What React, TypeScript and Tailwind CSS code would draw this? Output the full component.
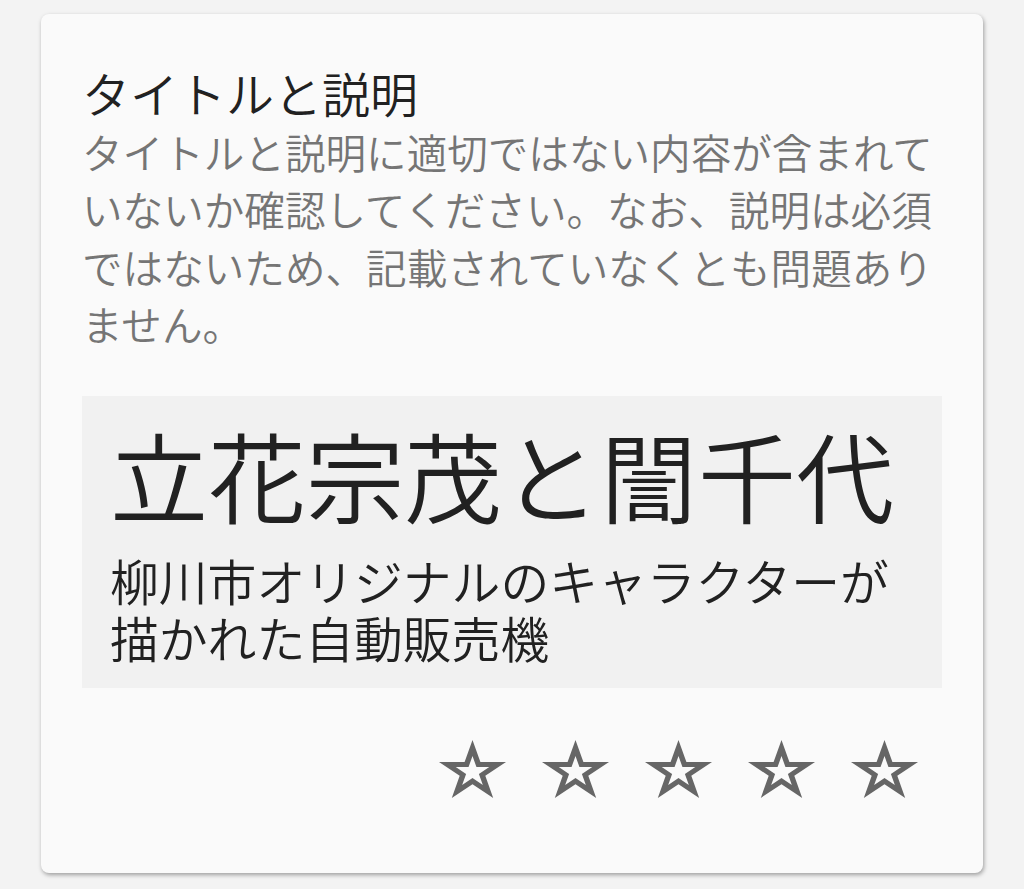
import React from "react";

const Star = () => (
  <svg width="67" height="58" viewBox="0 0 67 58" className="block">
    <path
      fillRule="evenodd"
      fill="#666666"
      d="M33.5 0 L41.4 22.1 L67 22.1 L46.3 35.8 L54.2 57.9 L33.5 44.2 L12.8 57.9 L20.7 35.8 L0 22.1 L25.6 22.1 Z M33.5 16 L37.45 27.06 L50.25 27.06 L39.9 33.89 L43.85 44.95 L33.5 38.11 L23.15 44.95 L27.1 33.89 L16.75 27.06 L29.55 27.06 Z"
    />
  </svg>
);

export default function App() {
  const font = { fontFamily: '"Noto Sans CJK JP", "Noto Sans", sans-serif' };
  return (
    <div className="min-h-[889px] w-[1024px] bg-[#f3f3f3] pt-[14px] pl-[41px]" style={font}>
      <div className="w-[942px] h-[859px] bg-[#fafafa] rounded-[8px] shadow-[1px_2px_4px_rgba(0,0,0,0.35)] px-[41px] pt-[50px] flex flex-col font-[350]">
        <div className="text-[48px] leading-[56px] text-[#212121]">タイトルと説明</div>
        <div className="mt-[3px] text-[40.6px] leading-[57.3px] text-[#757575]">
          タイトルと説明に適切ではない内容が含まれていないか確認してください。なお、説明は必須ではないため、記載されていなくとも問題ありません。
        </div>
        <div className="mt-[44px] bg-[#f1f1f1] px-[28px] pt-[22px] pb-[23px]">
          <div className="text-[98px] leading-[110px] text-[#212121]">立花宗茂と誾千代</div>
          <div className="mt-[23px] text-[48.8px] leading-[57px] text-[#212121]">
            柳川市オリジナルのキャラクターが描かれた自動販売機
          </div>
        </div>
        <div className="mt-[52px] flex justify-end gap-[36px] pr-[24px]">
          <Star />
          <Star />
          <Star />
          <Star />
          <Star />
        </div>
      </div>
    </div>
  );
}
